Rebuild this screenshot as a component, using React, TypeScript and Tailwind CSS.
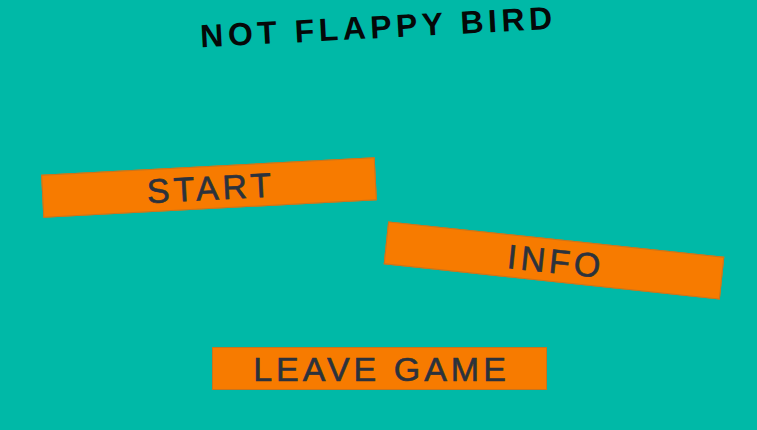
import React from 'react';

interface MenuButtonProps {
  label: string;
  className: string;
}

const MenuButton: React.FC<MenuButtonProps> = ({ label, className }) => {
  return (
    <button
      className={`flex items-center justify-center h-[43px] pl-[4px] bg-[#f77b00] border border-[#c8741e] text-[#2b323d] text-[34px] leading-none tracking-[4px] [-webkit-text-stroke:0.6px_#2b323d] ${className}`}
    >
      {label}
    </button>
  );
};

const App: React.FC = () => {
  return (
    <div
      className="w-full h-[430px] bg-[#00b9a7] overflow-hidden flex flex-col"
      style={{ fontFamily: '"Liberation Sans", Arial, sans-serif' }}
    >
      <div className="pt-[7px] flex justify-center">
        <h1 className="text-[32px] leading-[40px] font-bold tracking-[4.5px] text-[#050808] -rotate-3">
          NOT FLAPPY BIRD
        </h1>
      </div>

      <MenuButton label="START" className="mt-[119px] ml-[42px] w-[334px] -rotate-3" />
      <MenuButton label="INFO" className="mt-[30px] ml-[385px] w-[338px] rotate-6" />
      <MenuButton label="LEAVE GAME" className="mt-[65px] ml-[212px] w-[335px]" />
    </div>
  );
};

export default App;
